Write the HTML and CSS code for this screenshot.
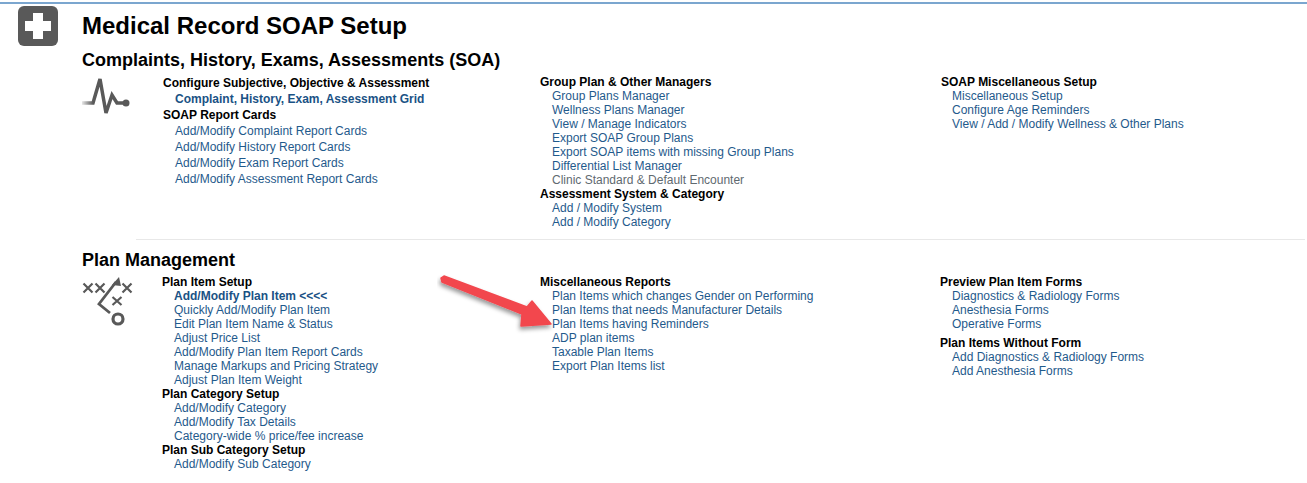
FILE: index.html
```html
<!DOCTYPE html>
<html lang="en">

<head>
    <meta charset="UTF-8">
    <title>Medical Record SOAP Setup</title>
    <link rel="stylesheet" href="styles.css">
</head>

<body>
    <div class="page">
        <div class="side">
            <div class="plus-box"><span class="plus-v"></span><span class="plus-h"></span></div>
        </div>
        <div class="main">
            <h1>Medical Record SOAP Setup</h1>

            <h2 class="first-head">Complaints, History, Exams, Assessments (SOA)</h2>
            <div class="section soa">
                <svg class="icon" width="54" height="44" viewBox="0 0 54 44">
                    <defs>
                        <linearGradient id="fade" gradientUnits="userSpaceOnUse" x1="0" x2="44" y1="0" y2="0">
                            <stop offset="0" stop-color="#595959" stop-opacity="0.15" />
                            <stop offset="0.25" stop-color="#595959" />
                        </linearGradient>
                    </defs>
                    <path d="M0 28H11L18 4L24 38L30 20L35 28H44" fill="none" stroke="url(#fade)" stroke-width="3.500" />
                    <circle cx="44" cy="28" r="3.500" fill="#595959" />
                </svg>
                <div class="col col-1 tall">
                    <div class="label">Configure Subjective, Objective &amp; Assessment</div>
                    <a class="strong-link">Complaint, History, Exam, Assessment Grid</a>
                    <div class="label">SOAP Report Cards</div>
                    <a>Add/Modify Complaint Report Cards</a>
                    <a>Add/Modify History Report Cards</a>
                    <a>Add/Modify Exam Report Cards</a>
                    <a>Add/Modify Assessment Report Cards</a>
                </div>
                <div class="col col-2">
                    <div class="label">Group Plan &amp; Other Managers</div>
                    <a>Group Plans Manager</a>
                    <a>Wellness Plans Manager</a>
                    <a>View / Manage Indicators</a>
                    <a>Export SOAP Group Plans</a>
                    <a>Export SOAP items with missing Group Plans</a>
                    <a>Differential List Manager</a>
                    <a class="muted">Clinic Standard &amp; Default Encounter</a>
                    <div class="label">Assessment System &amp; Category</div>
                    <a>Add / Modify System</a>
                    <a>Add / Modify Category</a>
                </div>
                <div class="col col-3">
                    <div class="label">SOAP Miscellaneous Setup</div>
                    <a>Miscellaneous Setup</a>
                    <a>Configure Age Reminders</a>
                    <a>View / Add / Modify Wellness &amp; Other Plans</a>
                </div>
            </div>

            <hr class="divider">

            <h2>Plan Management</h2>
            <div class="section plan">
                <svg class="icon" width="54" height="54" viewBox="0 0 54 54" fill="none" stroke="#595959" stroke-width="2.200">
                    <path d="M1.500 8.500L10.500 17.500M10.500 8.500L1.500 17.500M13.500 8.500L22.500 17.500M22.500 8.500L13.500 17.500M40.500 8.500L49.500 17.500M49.500 8.500L40.500 17.500M30.500 22L39.500 30M39.500 22L30.500 30" />
                    <path d="M28 38L17 29L34 7" stroke-width="2.800" />
                    <path d="M37 2L30 10L39 11Z" fill="#595959" stroke="none" />
                    <circle cx="36" cy="44" r="5" stroke-width="3.200" />
                </svg>
                <div class="col col-1">
                    <div class="label">Plan Item Setup</div>
                    <a class="strong-link">Add/Modify Plan Item &lt;&lt;&lt;&lt;</a>
                    <a>Quickly Add/Modify Plan Item</a>
                    <a>Edit Plan Item Name &amp; Status</a>
                    <a>Adjust Price List</a>
                    <a>Add/Modify Plan Item Report Cards</a>
                    <a>Manage Markups and Pricing Strategy</a>
                    <a>Adjust Plan Item Weight</a>
                    <div class="label">Plan Category Setup</div>
                    <a>Add/Modify Category</a>
                    <a>Add/Modify Tax Details</a>
                    <a>Category-wide % price/fee increase</a>
                    <div class="label">Plan Sub Category Setup</div>
                    <a>Add/Modify Sub Category</a>
                </div>
                <div class="col col-2">
                    <div class="label">Miscellaneous Reports</div>
                    <a>Plan Items which changes Gender on Performing</a>
                    <a>Plan Items that needs Manufacturer Details</a>
                    <a>Plan Items having Reminders</a>
                    <a>ADP plan items</a>
                    <a>Taxable Plan Items</a>
                    <a>Export Plan Items list</a>
                </div>
                <div class="col col-3">
                    <div class="label">Preview Plan Item Forms</div>
                    <a>Diagnostics &amp; Radiology Forms</a>
                    <a>Anesthesia Forms</a>
                    <a>Operative Forms</a>
                    <div class="label gap">Plan Items Without Form</div>
                    <a>Add Diagnostics &amp; Radiology Forms</a>
                    <a>Add Anesthesia Forms</a>
                </div>
            </div>
        </div>
    </div>

    <!-- red annotation arrow drawn over the page -->
    <svg class="arrow" width="130" height="70" viewBox="0 0 130 70">
        <defs>
            <filter id="soft" x="-20%" y="-20%" width="140%" height="150%">
                <feDropShadow dx="-1" dy="3" stdDeviation="2" flood-color="#000" flood-opacity="0.4" />
            </filter>
        </defs>
        <path d="M7 3L4 5L5 9L85 41L84 53L114 51L95 28L90 34Z" fill="#f2474e" stroke="#f2474e" stroke-width="1.500" stroke-linejoin="round" filter="url(#soft)" />
    </svg>
</body>

</html>
```

FILE: styles.css
```css
html {
    position: relative;
}

body {
    margin: 2px 0 0;
    border-top: 2px solid #7ba6cf;
    background-color: white;
    font-family: 'Liberation Sans', Arial, sans-serif;
    font-size: 12px;
    color: black;
    overflow: hidden;
}

.page {
    display: flex;
    padding-left: 18px;
}

.side {
    width: 64px;
    flex-shrink: 0;
    padding-top: 2px;
}

.plus-box {
    position: relative;
    width: 40px;
    height: 40px;
    border-radius: 6px;
    background-color: #595959;
}

.plus-v,
.plus-h {
    position: absolute;
    background-color: white;
}

.plus-v {
    left: 15px;
    top: 7px;
    width: 10px;
    height: 26px;
}

.plus-h {
    left: 7px;
    top: 15px;
    width: 26px;
    height: 10px;
}

.main {
    flex: 1;
}

h1 {
    margin: 0;
    padding-top: 8px;
    font-size: 24px;
    line-height: 28px;
}

h2 {
    margin: 0;
    font-size: 18px;
    line-height: 22px;
}

.first-head {
    margin-top: 9px;
}

.section {
    display: flex;
    align-items: flex-start;
    padding-top: 4px;
}

.soa {
    height: 164px;
}

.icon {
    flex-shrink: 0;
    margin-right: 27px;
}

.plan .icon {
    margin-right: 26px;
}

.col {
    display: flex;
    flex-direction: column;
    line-height: 14px;
}

.col-1 {
    width: 377px;
}

.plan .col-1 {
    width: 378px;
}

.col-2 {
    width: 401px;
}

.plan .col-2 {
    width: 400px;
}

.soa .col-3 a {
    padding-left: 11px;
}

.tall {
    line-height: 16px;
}

.label {
    font-weight: bold;
}

.gap {
    margin-top: 5px;
}

a {
    display: block;
    padding-left: 12px;
    color: #1f5a8c;
}

.strong-link {
    font-weight: bold;
    color: #1a5285;
}

.muted {
    color: #5f6a70;
}

.divider {
    margin: 0 2px 9px 54px;
    border: 0;
    border-top: 1px solid #e8e8e8;
}

.arrow {
    position: absolute;
    left: 437px;
    top: 273px;
}
```
